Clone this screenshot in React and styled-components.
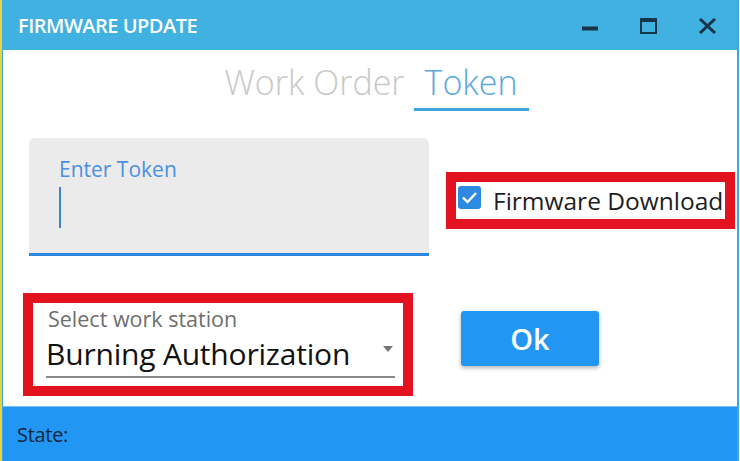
import React from 'react'
import styled, { createGlobalStyle } from 'styled-components'

const GlobalStyle = createGlobalStyle`
  html, body {
    margin: 0;
    padding: 0;
    background: #ffffff;
  }
  body {
    font-family: "Open Sans", "Noto Sans", sans-serif;
  }
`

const Screen = styled.div`
  display: flex;
  width: 740px;
  height: 461px;
  overflow: hidden;
  background: #ffffff;
`

const DesktopEdge = styled.div`
  width: 2px;
  flex-shrink: 0;
  background: #e8d24a;
`

const Window = styled.div`
  display: flex;
  flex-direction: column;
  flex-shrink: 0;
  width: 735px;
  border-right: 2px solid #3aa8dc;
`

const TitleBar = styled.div`
  display: flex;
  align-items: center;
  justify-content: space-between;
  height: 50px;
  padding-left: 16px;
  background: #41b1e1;
`

const Title = styled.span`
  color: #ffffff;
  font-size: 20px;
  font-weight: 600;
  letter-spacing: -0.5px;
`

const Controls = styled.div`
  display: flex;
  height: 100%;
`

const ControlButton = styled.div`
  display: flex;
  align-items: center;
  justify-content: center;
  width: 59px;
  height: 100%;
  padding-top: ${p => p.$low ? '6px' : '1px'};
  box-sizing: border-box;
`

const Body = styled.div`
  flex: 1;
  display: flex;
  flex-direction: column;
  border-left: 1px solid #3aa8dc;
  padding-top: 12px;
`

const Tabs = styled.div`
  display: flex;
  justify-content: center;
  padding-left: 4px;
`

const Tab = styled.div`
  padding: 0 ${p => p.$active ? 11 : 9}px 6px;
  font-size: 34px;
  font-weight: 300;
  line-height: 40px;
  color: ${p => p.$active ? '#5aa7dc' : '#c8c8c8'};
  border-bottom: 3px solid ${p => p.$active ? '#3aa4dc' : 'transparent'};
`

const Row = styled.div`
  display: flex;
  align-items: center;
  gap: ${p => p.$gap}px;
  padding-left: ${p => p.$indent}px;
  margin-top: ${p => p.$top}px;
`

const TextField = styled.div`
  display: flex;
  flex-direction: column;
  flex-shrink: 0;
  width: 400px;
  height: 118px;
  box-sizing: border-box;
  padding: 17px 0 0 30px;
  background: #ebebeb;
  border-radius: 6px 6px 0 0;
  border-bottom: 3px solid #2a87df;
`

const FieldLabel = styled.span`
  font-size: 21px;
  line-height: 28px;
  color: #4a90e2;
`

const Caret = styled.span`
  width: 2px;
  height: 41px;
  margin-top: 4px;
  background: #3b82d8;
`

const Highlight = styled.div`
  flex-shrink: 0;
  margin-top: ${p => p.$drop || 0}px;
  border: 10px solid #e2131e;
  background: #ffffff;
`

const CheckRow = styled.label`
  display: flex;
  align-items: center;
  gap: 12px;
  height: 37px;
  padding: 0 2px;
  font-size: 24.5px;
  white-space: nowrap;
  color: #1e1e1e;
`

const CheckBox = styled.span`
  display: flex;
  align-items: center;
  justify-content: center;
  flex-shrink: 0;
  width: 23px;
  height: 23px;
  margin-top: -6px;
  border-radius: 3px;
  background: #2d8ae0;
`

const SelectField = styled.div`
  display: flex;
  flex-direction: column;
  width: 370px;
  height: 83px;
  box-sizing: border-box;
  padding: 2px 8px 0 13px;
`

const SelectLabel = styled.span`
  padding-left: 2px;
  font-size: 21.5px;
  line-height: 27px;
  color: #6e6e6e;
`

const SelectValue = styled.div`
  display: flex;
  align-items: center;
  justify-content: space-between;
  padding-right: 2px;
  border-bottom: 2px solid #8a8a8a;
  font-size: 30px;
  line-height: 44px;
  white-space: nowrap;
  color: #111111;
  letter-spacing: -0.2px;
`

const Arrow = styled.span`
  width: 0;
  height: 0;
  margin-top: -10px;
  border-left: 5px solid transparent;
  border-right: 5px solid transparent;
  border-top: 6px solid #767676;
`

const OkButton = styled.button`
  flex-shrink: 0;
  width: 138px;
  height: 55px;
  margin-top: -12px;
  border: none;
  border-radius: 3px;
  background: #2196f3;
  box-shadow: 0 2px 4px rgba(0, 0, 0, 0.3);
  color: #ffffff;
  font-family: "Open Sans", sans-serif;
  font-size: 29px;
  font-weight: 600;
`

const StatusBar = styled.div`
  display: flex;
  align-items: center;
  height: 54px;
  margin-top: auto;
  padding-left: 14px;
  background: #2196f3;
  border-top: 1px solid #7cc0f5;
`

const StatusText = styled.span`
  font-size: 20px;
  color: #10263a;
  letter-spacing: -0.3px;
`

export default function App() {
  return (
    <Screen>
      <GlobalStyle />
      <DesktopEdge />
      <Window>
        <TitleBar>
          <Title>FIRMWARE UPDATE</Title>
          <Controls>
            <ControlButton $low>
              <svg width="16" height="5" viewBox="0 0 16 5"><rect x="0" y="0.5" width="16" height="4" fill="#173549" /></svg>
            </ControlButton>
            <ControlButton>
              <svg width="17" height="16" viewBox="0 0 17 16">
                <rect x="1" y="1" width="15" height="14" fill="none" stroke="#173549" strokeWidth="2" />
                <rect x="1" y="1" width="15" height="3" fill="#173549" />
              </svg>
            </ControlButton>
            <ControlButton>
              <svg width="19" height="16" viewBox="0 0 19 16">
                <path d="M2 1 L17 15 M17 1 L2 15" stroke="#173549" strokeWidth="3" />
              </svg>
            </ControlButton>
          </Controls>
        </TitleBar>
        <Body>
          <Tabs>
            <Tab>Work Order</Tab>
            <Tab $active>Token</Tab>
          </Tabs>
          <Row $indent={26} $gap={17} $top={27}>
            <TextField>
              <FieldLabel>Enter Token</FieldLabel>
              <Caret />
            </TextField>
            <Highlight $drop={6}>
              <CheckRow>
                <CheckBox>
                  <svg width="17" height="13" viewBox="0 0 17 13">
                    <path d="M2 6.5 L6.5 11 L15 2" fill="none" stroke="#ffffff" strokeWidth="2.4" />
                  </svg>
                </CheckBox>
                Firmware Download
              </CheckRow>
            </Highlight>
          </Row>
          <Row $indent={20} $gap={48} $top={37}>
            <Highlight>
              <SelectField>
                <SelectLabel>Select work station</SelectLabel>
                <SelectValue>
                  Burning Authorization
                  <Arrow />
                </SelectValue>
              </SelectField>
            </Highlight>
            <OkButton>Ok</OkButton>
          </Row>
          <StatusBar>
            <StatusText>State:</StatusText>
          </StatusBar>
        </Body>
      </Window>
    </Screen>
  )
}
